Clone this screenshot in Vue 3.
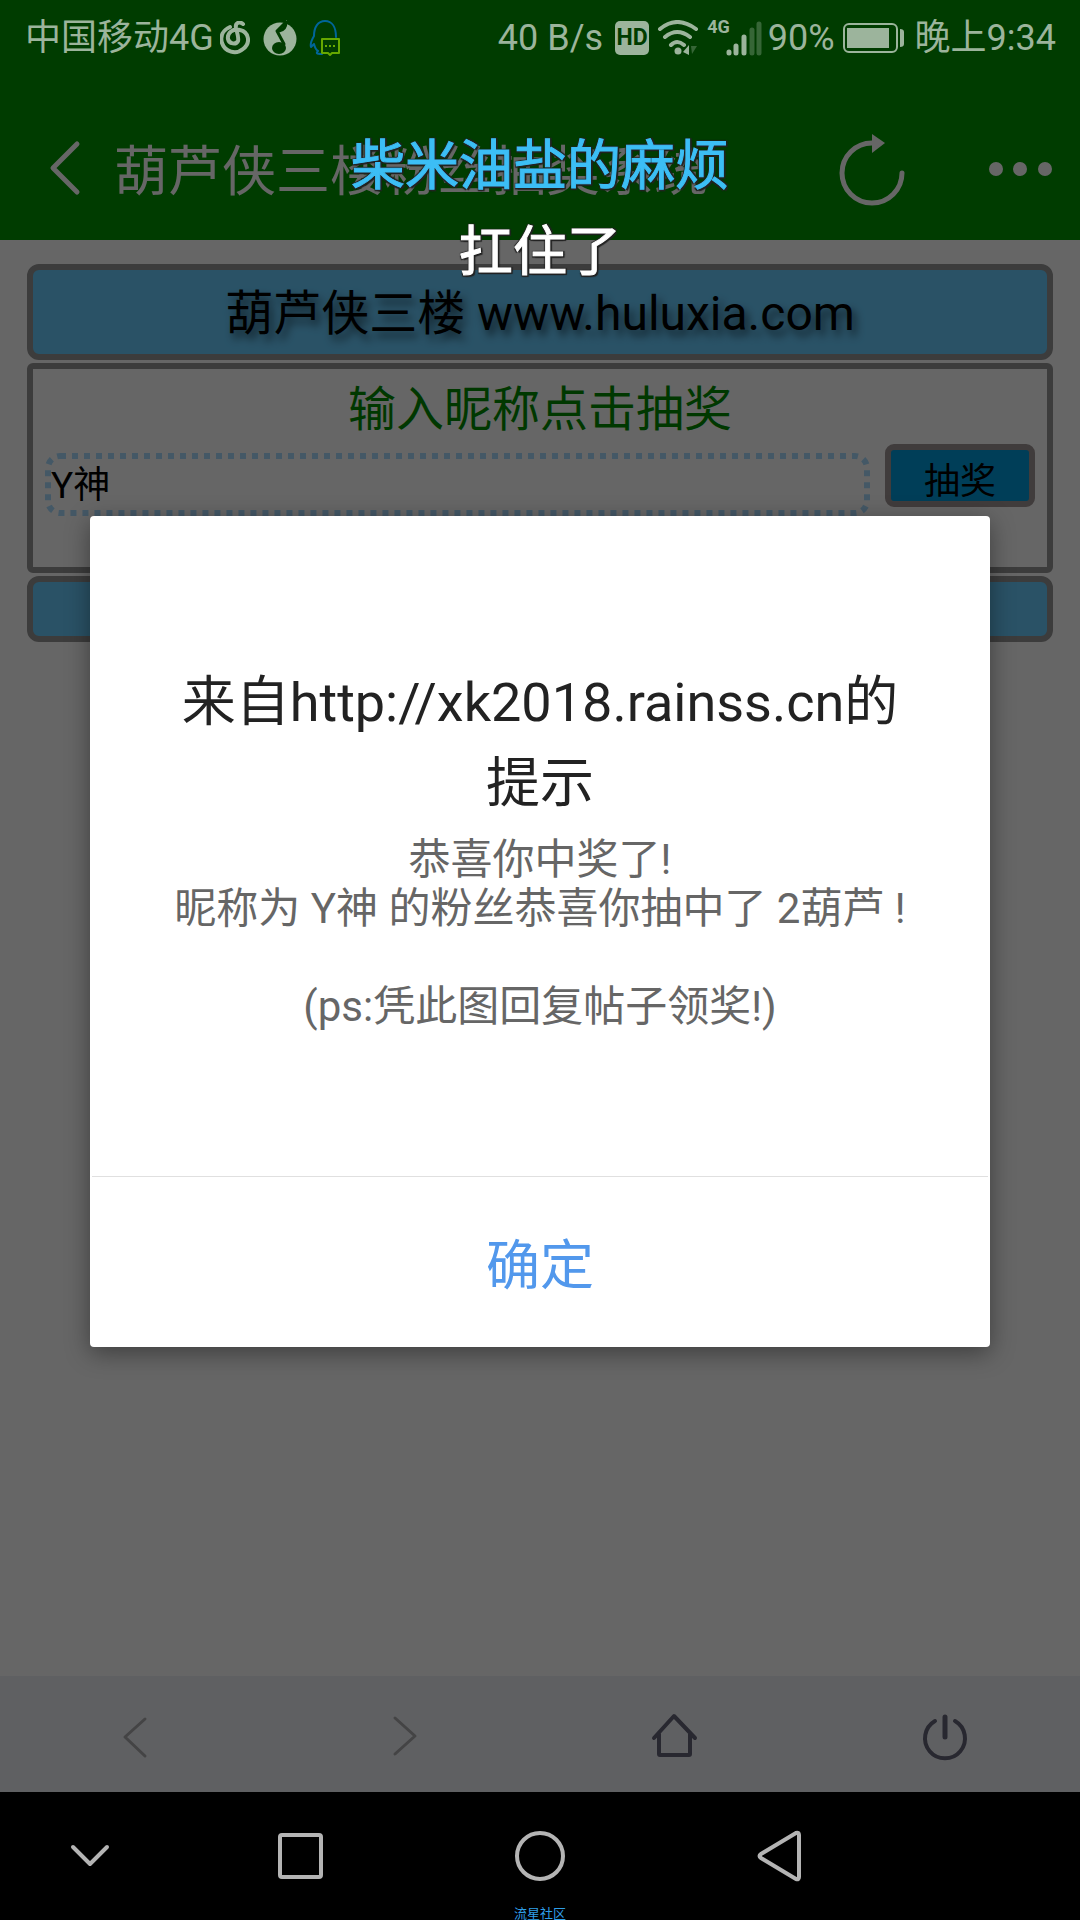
<template>
  <div class="screen">
    <div class="webview">
      <header class="app-header">
        <button class="icon-button back" type="button" aria-label="返回">
          <svg width="34" height="60" viewBox="0 0 34 60"><path d="M29 4 5 28l24 24" /></svg>
        </button>
        <h1>葫芦侠三楼粉丝抽奖系统</h1>
        <button class="icon-button reload" type="button" aria-label="刷新">
          <svg width="72" height="80" viewBox="0 0 72 80">
            <path d="M36 13a30 30 0 1 0 30 30" />
            <path class="solid" d="M36 4l13 9-13 10z" />
          </svg>
        </button>
        <button class="icon-button more" type="button" aria-label="更多">
          <svg width="66" height="20" viewBox="0 0 66 20">
            <circle class="solid" cx="8" cy="9" r="7" />
            <circle class="solid" cx="32" cy="9" r="7" />
            <circle class="solid" cx="57" cy="9" r="7" />
          </svg>
        </button>
      </header>

      <main class="page">
        <div class="banner">葫芦侠三楼 www.huluxia.com</div>
        <form class="panel" @submit.prevent="open = true">
          <label class="panel-title" for="nickname">输入昵称点击抽奖</label>
          <div class="row">
            <div class="field">
              <svg class="field-border"><rect x="3" y="3" rx="12" /></svg>
              <input id="nickname" v-model="nickname" type="text" />
            </div>
            <button class="draw" type="submit">抽奖</button>
          </div>
        </form>
        <div class="banner footer"></div>
      </main>

      <nav class="toolbar">
        <button class="faded" type="button" aria-label="后退">
          <svg width="60" height="60" viewBox="0 0 60 60"><path d="M40 11 20 29l20 19" /></svg>
        </button>
        <button class="faded" type="button" aria-label="前进">
          <svg width="60" height="60" viewBox="0 0 60 60"><path d="M20 10l20 18-20 18" /></svg>
        </button>
        <button type="button" aria-label="主页">
          <svg width="60" height="60" viewBox="0 0 60 60">
            <path d="M9 30 29 8l21 22M14 26v20q0 1 1 1h29q1 0 1-1V26" />
          </svg>
        </button>
        <button type="button" aria-label="退出">
          <svg width="60" height="60" viewBox="0 0 60 60">
            <path d="M20 13a20 20 0 1 0 20 0" />
            <path class="thick" d="M30 9v20" />
          </svg>
        </button>
      </nav>
      <div class="mask"></div>
    </div>

    <div class="status-bar">
      <span>中国移动4G</span>
      <svg class="netease" width="30" height="34" viewBox="0 0 30 34">
        <path d="M10 6C3 9 0 15 2 22c3 9 14 12 21 6 8-6 6-17-3-19-7-2-13 3-12 9 1 5 8 6 10 2 1-3-1-9-2-13-1-5 3-7 7-4" />
      </svg>
      <svg class="qqmusic" width="36" height="38" viewBox="0 0 36 38">
        <circle cx="18" cy="20" r="16.500" />
        <path d="M14 12 25 1v7q-4 2-7 4z" />
        <path class="note" d="M17 12q7-1 7-9l-9 9 7 13" />
        <ellipse class="hole" cx="17" cy="29" rx="7" ry="6" />
      </svg>
      <svg class="qq" width="32" height="38" viewBox="0 0 32 38">
        <path d="M27 18C27 8 23 2 16 2S5 8 5 17c-3 5-4 8-3 11l3-3c1 4 2 6 4 7-2 2-2 3 4 3" />
        <path class="bubble" d="M13 20h17v14h-7l-2 2-2-2h-6z" />
        <path class="dots" d="M16 27h2m2 0h2m2 0h2" />
      </svg>
      <span class="speed">40 B/s</span>
      <span class="hd">HD</span>
      <svg class="wifi" width="42" height="36" viewBox="0 0 42 36">
        <path d="M3 9q17-14 36 0M8 17q12-10 25 0M14 25q6-6 13 0" />
        <circle cx="21" cy="31" r="3.500" />
        <path class="arrow" d="M26 32l6-7v10z" />
        <path class="arrow dim" d="M34 26h6l-5 8z" />
      </svg>
      <span class="net">4G</span>
      <svg class="signal" width="36" height="36" viewBox="0 0 36 36">
        <path d="M3 32v1M10 26v7M18 17v16" />
        <path class="dim" d="M26 10v23M33 4v29" />
      </svg>
      <span class="percent">90%</span>
      <svg class="battery" width="62" height="32" viewBox="0 0 62 32">
        <rect x="1" y="2" width="53" height="28" rx="5" />
        <path class="fill" d="M4 6h42v20H4zM57 7q4 0 4 3v12q0 3-4 3z" />
      </svg>
      <time>晚上9:34</time>
    </div>

    <div v-if="open" class="dialog" role="alertdialog" aria-labelledby="dialog-title">
      <div class="dialog-body">
        <h2 id="dialog-title">来自http://xk2018.rainss.cn的提示</h2>
        <p>{{ message }}</p>
      </div>
      <button type="button" class="confirm" @click="open = false">确定</button>
    </div>

    <div class="lyrics">
      <p class="current">柴米油盐的麻烦</p>
      <p>扛住了</p>
    </div>

    <nav class="system-nav">
      <button type="button" aria-label="收起">
        <svg width="60" height="60" viewBox="0 0 60 60"><path d="M13 21l17 17 17-17" /></svg>
      </button>
      <button type="button" aria-label="最近任务">
        <svg width="60" height="60" viewBox="0 0 60 60"><rect x="10" y="9" width="41" height="42" rx="2" /></svg>
      </button>
      <button type="button" aria-label="桌面">
        <svg width="60" height="60" viewBox="0 0 60 60"><circle cx="30" cy="30" r="23" /></svg>
      </button>
      <button type="button" aria-label="返回">
        <svg width="60" height="60" viewBox="0 0 60 60"><path d="M46 7q3-1 3 2v42q0 3-3 2L11 32q-3-2 0-4z" /></svg>
      </button>
      <span class="watermark">流星社区</span>
    </nav>
  </div>
</template>

<script setup>
import { computed, ref } from 'vue'

const open = ref(true)
const nickname = ref('Y神')
const prize = ref('2葫芦')

const message = computed(() =>
  `恭喜你中奖了!\n昵称为 ${nickname.value} 的粉丝恭喜你抽中了 ${prize.value} !\n\n(ps:凭此图回复帖子领奖!)`
)
</script>

<style>
body {
  margin: 0;
  background: #000;
}
</style>

<style scoped>
* {
  box-sizing: border-box;
}

.screen {
  position: relative;
  display: flex;
  flex-direction: column;
  min-height: 100vh;
  font-family: Roboto, "Noto Sans CJK SC", sans-serif;
}

h1,
h2,
p {
  margin: 0;
  font-weight: 400;
}

button {
  padding: 0;
  border: 0;
  background: none;
  font-family: inherit;
}

svg {
  display: block;
  flex: none;
  fill: none;
  stroke-linecap: round;
  stroke-linejoin: round;
}

.webview {
  position: relative;
  flex: 1;
  display: flex;
  flex-direction: column;
  background: #fff;
}

.mask {
  position: absolute;
  inset: 0;
  background: rgba(0, 0, 0, 0.6);
}

/* header */
.app-header {
  display: flex;
  align-items: center;
  height: 240px;
  padding: 100px 26px 0 48px;
  background: #009600;
}

.app-header h1 {
  flex: 1;
  margin-left: 32px;
  padding-top: 6px;
  color: #fff;
  font-size: 54px;
  line-height: 64px;
}

.icon-button svg {
  stroke: #fff;
  stroke-width: 5;
}

.icon-button .solid {
  fill: #fff;
  stroke: none;
}

.more {
  margin-left: 80px;
}

/* page */
.page {
  flex: 1;
  display: flex;
  flex-direction: column;
  gap: 3px;
  padding: 24px 27px;
}

.banner {
  padding: 14px 12px 10px;
  border: 6px solid #969696;
  border-radius: 12px;
  background: #69cdff;
  font-size: 48px;
  line-height: 60px;
  text-align: center;
  text-shadow: 4px 6px 9px rgba(0, 0, 0, 0.6);
}

.footer {
  height: 66px;
}

.panel {
  height: 210px;
  padding: 11px 12px;
  border: 6px solid #969696;
  border-radius: 6px;
}

.panel-title {
  display: block;
  color: #008c00;
  font-size: 48px;
  line-height: 60px;
  text-align: center;
}

.row {
  display: flex;
  align-items: flex-start;
  gap: 15px;
  padding-top: 4px;
}

.field {
  position: relative;
  flex: 1;
  height: 63px;
  margin-top: 9px;
}

.field-border {
  position: absolute;
  inset: 0;
  width: 100%;
  height: 100%;
}

.field-border rect {
  width: calc(100% - 6px);
  height: calc(100% - 6px);
  stroke: #aaddff;
  stroke-width: 6;
  stroke-linecap: butt;
  stroke-dasharray: 6 6;
}

.field input {
  position: relative;
  width: 100%;
  height: 57px;
  padding: 0 6px;
  border: 0;
  background: none;
  font-family: inherit;
  font-size: 37px;
}

.draw {
  width: 150px;
  height: 63px;
  padding-top: 2px;
  border: 6px solid #a09696;
  border-radius: 9px;
  background: #009bdc;
  color: #000;
  font-size: 36px;
}

/* browser toolbar */
.toolbar {
  display: flex;
  height: 116px;
  background: #eef0f5;
}

.toolbar button {
  flex: 1;
  display: flex;
  align-items: center;
  justify-content: center;
  padding-top: 8px;
}

.toolbar svg {
  stroke: #646478;
  stroke-width: 4;
}

.toolbar .faded svg {
  stroke: #aaaaac;
  stroke-width: 3;
}

.toolbar .thick {
  stroke-width: 5;
}

/* status bar */
.status-bar {
  position: absolute;
  top: 0;
  left: 0;
  right: 0;
  display: flex;
  align-items: center;
  height: 76px;
  padding: 0 24px 0 25px;
  color: #9cb49c;
  font-size: 36px;
  line-height: 42px;
  white-space: nowrap;
}

.status-bar svg {
  stroke: #9cb49c;
  stroke-width: 3;
}

.status-bar .netease {
  margin-left: 6px;
  stroke-width: 4;
}

.qqmusic {
  margin-left: 12px;
}

.status-bar .qqmusic {
  fill: #9cb49c;
  stroke: none;
}

.qqmusic .note {
  fill: none;
  stroke: #003c00;
  stroke-width: 3;
}

.qqmusic .hole {
  fill: #003c00;
}

.qq {
  margin-left: 11px;
}

.status-bar .qq {
  stroke: #00669a;
  stroke-width: 2;
}

.qq .bubble,
.qq .dots {
  fill: #003c00;
  stroke: #66a800;
}

.qq .dots {
  stroke-linecap: butt;
}

.speed {
  margin-left: auto;
}

.hd {
  width: 34px;
  height: 34px;
  margin-left: 12px;
  border-radius: 5px;
  background: #9cb49c;
  color: #003c00;
  font-size: 23px;
  font-weight: 700;
  line-height: 34px;
  text-align: center;
}

.wifi {
  margin-left: 8px;
}

.status-bar .wifi {
  stroke-width: 4;
}

.wifi circle,
.wifi .arrow {
  fill: #9cb49c;
  stroke: none;
}

.dim {
  opacity: 0.35;
}

.net {
  align-self: flex-start;
  margin-left: 8px;
  padding-top: 17px;
  font-size: 18px;
  font-weight: 700;
  line-height: 20px;
}

.signal {
  margin-left: -4px;
}

.status-bar .signal {
  stroke-width: 5;
}

.percent {
  margin-left: 6px;
}

.battery {
  margin-left: 8px;
}

.status-bar .battery {
  stroke-width: 2;
}

.battery .fill {
  fill: #9cb49c;
  stroke: none;
}

time {
  margin-left: 10px;
}

/* dialog */
.dialog {
  position: absolute;
  top: 516px;
  left: 90px;
  right: 90px;
  border-radius: 4px;
  background: #fff;
  box-shadow: 0 6px 24px rgba(0, 0, 0, 0.4);
  text-align: center;
}

.dialog-body {
  min-height: 661px;
  margin: 0 2px;
  padding: 146px 80px 0;
  border-bottom: 1px solid #e0e0e0;
}

.dialog h2 {
  color: #222;
  font-size: 54px;
  line-height: 81px;
}

.dialog p {
  margin-top: 11px;
  color: #666;
  font-size: 42px;
  line-height: 49px;
  white-space: pre-line;
}

.confirm {
  width: 100%;
  height: 170px;
  padding-bottom: 2px;
  color: #5298ec;
  font-size: 54px;
}

/* floating lyrics */
.lyrics {
  position: absolute;
  top: 124px;
  left: 0;
  right: 0;
  color: #fff;
  font-size: 54px;
  line-height: 86px;
  text-align: center;
  pointer-events: none;
  text-shadow: 2px 2px 1px #222, -1px -1px 1px #222, 2px -1px 1px #222, -1px 2px 1px #222;
  -webkit-text-stroke: 1px currentColor;
}

.lyrics .current {
  color: #3cbef5;
}

/* system navigation */
.system-nav {
  position: relative;
  display: grid;
  grid-template-columns: 3fr 4fr 4fr 4fr 3fr;
  align-items: center;
  justify-items: center;
  height: 128px;
  background: #000;
}

.system-nav svg {
  stroke: #b4b4b4;
  stroke-width: 4;
}

.watermark {
  position: absolute;
  bottom: 0;
  left: 0;
  right: 0;
  color: #2f9fe8;
  font-size: 13px;
  line-height: 12px;
  text-align: center;
}
</style>
